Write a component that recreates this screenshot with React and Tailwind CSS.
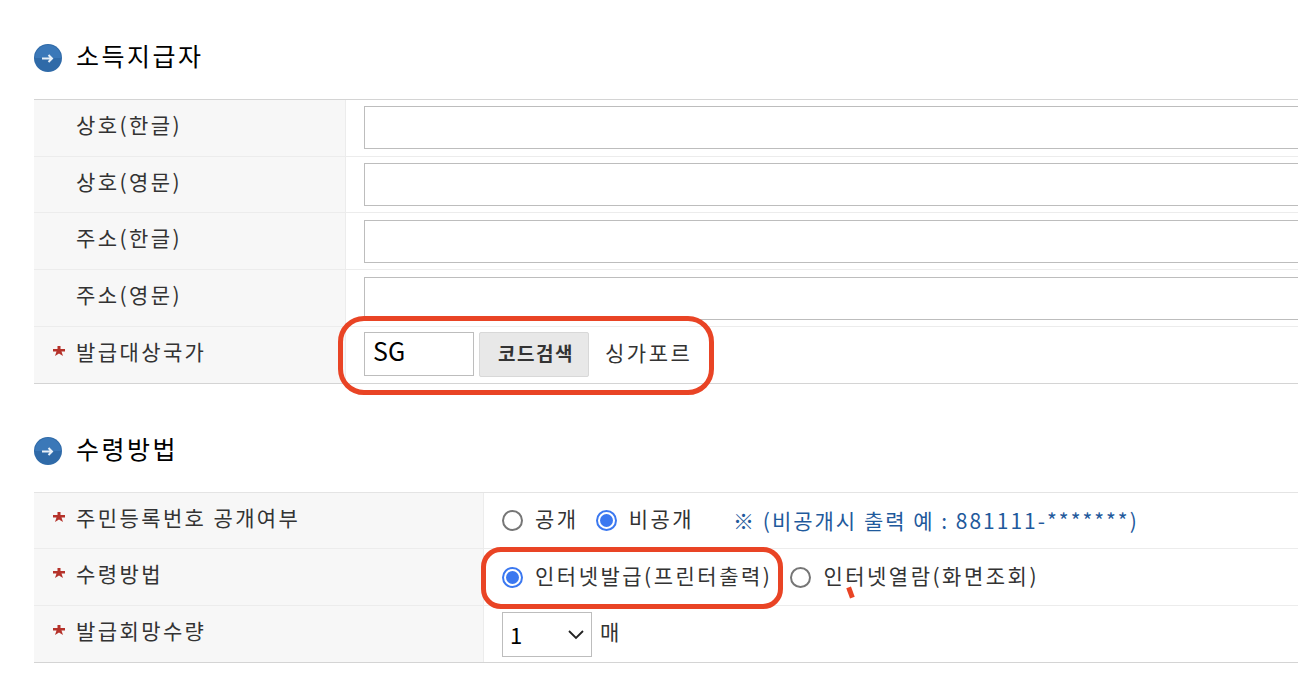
import React from 'react';

const BulletIcon = () => (
  <svg width="28" height="28" viewBox="0 0 28 28" className="shrink-0 translate-y-[1px]">
    <circle cx="14" cy="14" r="14" fill="#2f6aa8" />
    <path d="M1 14a13 13 0 0 1 26 0z" fill="#3b78b8" />
    <path d="M8 14.5h10M14.5 11l3.5 3.5-3.5 3.5" fill="none" stroke="#e8f0f8" strokeWidth="2" />
  </svg>
);

const Star = () => (
  <svg width="12" height="10" viewBox="0 0 12 10" className="absolute left-[19px] top-[19px]">
    <path d="M4.5 0h3v3H12v2.5H8.5L10 10 6 7.5 2 10l1.500-4.500H0V3h4.500z" fill="#b5322a" />
  </svg>
);

const Heading = ({ children }) => (
  <div className="flex items-center gap-[14px] h-[28px] pl-[34px]">
    <BulletIcon />
    <h2 className="text-[25px] font-normal text-black tracking-[2.5px] -translate-y-[1px]">{children}</h2>
  </div>
);

const Row = ({ label, required, labelWidth, height, children, last }) => (
  <div className={`flex ${height} border-b ${last ? 'border-[#d4d4d4]' : 'border-[#ececec]'}`}>
    <div
      className={`relative shrink-0 flex items-start pt-[9px] pl-[42px] bg-[#f7f7f7] border-r border-[#ececec] text-[21px] text-[#333] tracking-[2.4px] ${labelWidth}`}
    >
      {required && <Star />}
      {label}
    </div>
    <div className="flex-1 flex items-center min-w-0 text-[21px] text-[#333] tracking-[2.5px]">{children}</div>
  </div>
);

const Radio = ({ checked, className = '' }) =>
  checked ? (
    <span className={`shrink-0 w-[21px] h-[21px] rounded-full border-2 border-[#3b78f0] bg-white flex items-center justify-center ${className}`}>
      <span className="w-[13px] h-[13px] rounded-full bg-[#3b78f0]" />
    </span>
  ) : (
    <span className={`shrink-0 w-[21px] h-[21px] rounded-full border-2 border-[#767676] bg-white ${className}`} />
  );

export default function App() {
  const rows1 = [
    { label: '상호(한글)', height: 'h-[57px]', inputClass: 'mt-[6px]' },
    { label: '상호(영문)', height: 'h-[56px]', inputClass: 'mt-[6px]' },
    { label: '주소(한글)', height: 'h-[57px]', inputClass: 'mt-[7px]' },
    { label: '주소(영문)', height: 'h-[57px]', inputClass: 'mt-[7px]' },
  ];

  return (
    <div
      className="relative w-[1298px] h-[696px] overflow-hidden bg-white"
      style={{ fontFamily: '"Noto Sans CJK KR", "Liberation Sans", sans-serif' }}
    >
      <div className="pt-[43px]">
        <Heading>소득지급자</Heading>

        <div className="ml-[34px] mt-[28px] border-t border-[#d4d4d4]">
          {rows1.map((row) => (
            <Row key={row.label} label={row.label} height={row.height} labelWidth="w-[312px]">
              <input className={`ml-[18px] h-[43px] w-[1000px] shrink-0 self-start border border-[#bdbdbd] bg-white ${row.inputClass}`} />
            </Row>
          ))}
          <Row label="발급대상국가" required height="h-[57px]" labelWidth="w-[312px]" last>
            <input
              readOnly
              value="SG"
              className="ml-[18px] mt-[5px] h-[44px] w-[110px] shrink-0 self-start border border-[#bdbdbd] bg-white px-2 pb-[8px] text-[25px] tracking-normal text-black"
            />
            <button className="ml-[5px] mt-[5px] h-[45px] w-[110px] shrink-0 self-start rounded-[2px] border border-[#d8d8d8] bg-[#e8e8e8] pl-[4px] pb-[2px] text-[19px] font-bold tracking-[1.5px] text-[#333]">
              코드검색
            </button>
            <span className="ml-[16px] -mt-[5px]">싱가포르</span>
          </Row>
        </div>

        <div className="mt-[52px]">
          <Heading>수령방법</Heading>
        </div>

        <div className="ml-[34px] mt-[28px] border-t border-[#e4e4e4]">
          <Row label="주민등록번호 공개여부" required height="h-[56px]" labelWidth="w-[450px]">
            <div className="ml-[18px] flex items-center">
              <Radio />
              <span className="ml-[12px] -mt-[3px]">공개</span>
              <Radio checked className="ml-[17px]" />
              <span className="ml-[12px] -mt-[3px]">비공개</span>
              <span className="ml-[39px] tracking-[2px] text-[#1f5a9c]">※ (비공개시 출력 예 : 881111-*******)</span>
            </div>
          </Row>
          <Row label="수령방법" required height="h-[57px]" labelWidth="w-[450px]">
            <div className="ml-[18px] flex items-center">
              <Radio checked />
              <span className="ml-[12px] -mt-[3px]">인터넷발급(프린터출력)</span>
              <Radio className="ml-[18px]" />
              <span className="ml-[12px] -mt-[3px]">인터넷열람(화면조회)</span>
            </div>
          </Row>
          <Row label="발급회망수량" required height="h-[57px]" labelWidth="w-[450px]" last>
            <div className="ml-[18px] flex items-center">
              <div className="relative w-[90px] h-[45px] border border-[#bdbdbd] bg-white flex items-center pl-[7px] text-[22px] tracking-normal text-black">
                1
                <svg width="18" height="10" viewBox="0 0 18 10" className="absolute right-[6px] top-[17px]">
                  <path d="M2 1l7 7 7-7" fill="none" stroke="#222" strokeWidth="1.8" />
                </svg>
              </div>
              <span className="ml-[8px] -mt-[4px]">매</span>
            </div>
          </Row>
        </div>
      </div>

      {/* annotations drawn over the screenshot */}
      <div className="absolute left-[338px] top-[316px] w-[376px] h-[79px] rounded-[26px] border-[5px] border-[#e94425]" />
      <div className="absolute left-[481px] top-[547px] w-[302px] h-[62px] rounded-[20px] border-[5px] border-[#e94425]" />
      <div className="absolute left-[848px] top-[587px] w-[5px] h-[11px] bg-[#e94425] -rotate-[20deg]" />
    </div>
  );
}
